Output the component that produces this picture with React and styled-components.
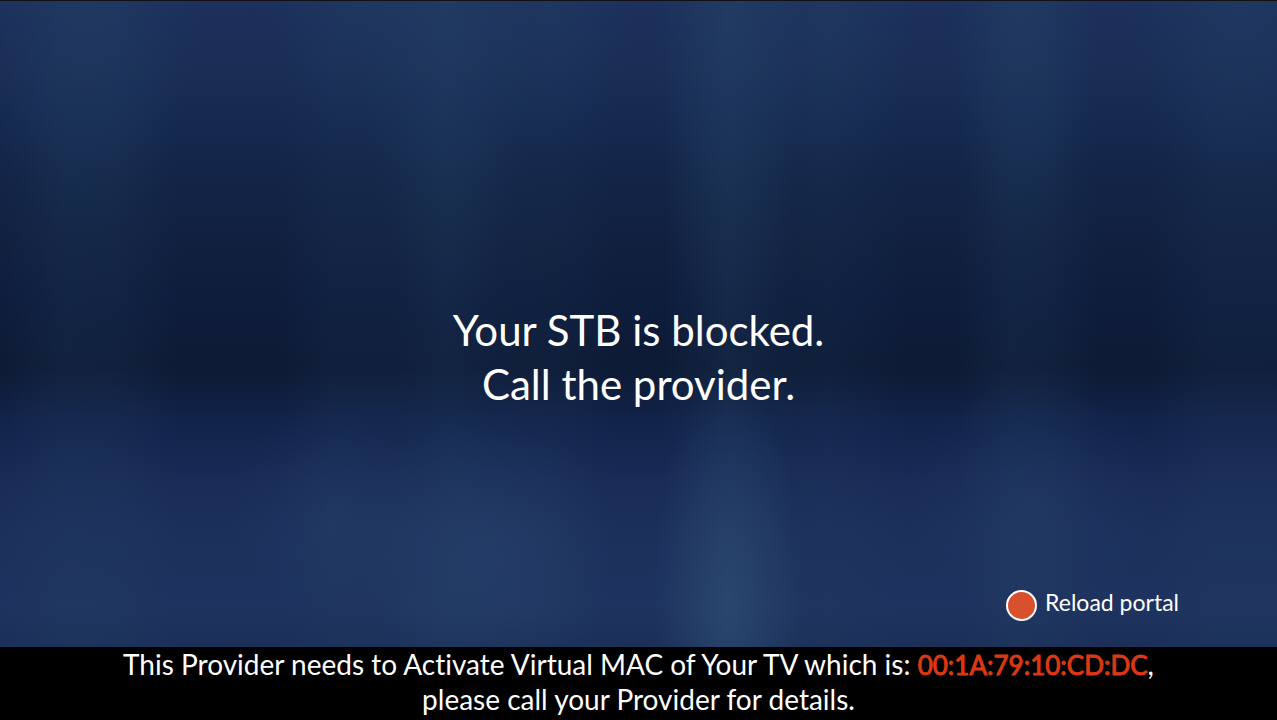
import React from "react";
import styled, { createGlobalStyle } from "styled-components";

const App = () => {
  return (
    <Page>
      <GlobalStyle />
      <Screen>
        <Message>
          Your STB is blocked.
          <br />
          Call the provider.
        </Message>
        <Actions>
          <ReloadButton type="button" onClick={() => window.location.reload()}>
            <RedKey />
            <span>Reload portal</span>
          </ReloadButton>
        </Actions>
      </Screen>
      <Notice>
        This Provider needs to Activate Virtual MAC of Your TV which is:{" "}
        <Mac>00:1A:79:10:CD:DC</Mac>,
        <br />
        please call your Provider for details.
      </Notice>
    </Page>
  );
};

const GlobalStyle = createGlobalStyle`
  * {
    box-sizing: border-box;
  }
  body {
    margin: 0;
    background: #000;
    color: #fff;
    font-family: "Myriad Pro", Lato, sans-serif;
    font-variant-ligatures: none;
  }
`;

const Page = styled.div`
  display: flex;
  flex-direction: column;
  min-height: 100vh;
`;

const Screen = styled.main`
  flex: 1;
  display: flex;
  flex-direction: column;
  border-top: 1px solid #111;
  padding: 122px 98px 26px;
  background:
    radial-gradient(ellipse 6% 36% at 57% 94%, rgba(56, 96, 136, 0.36), transparent),
    radial-gradient(ellipse 10% 22% at 38% 85%, rgba(50, 86, 130, 0.26), transparent),
    radial-gradient(ellipse 8% 16% at 26% 79%, rgba(50, 86, 130, 0.16), transparent),
    radial-gradient(ellipse 10% 18% at 81% 77%, rgba(50, 86, 130, 0.14), transparent),
    radial-gradient(ellipse 9% 36% at 7% 0%, rgba(38, 70, 108, 0.26), transparent),
    radial-gradient(ellipse 7% 20% at 28% 0%, rgba(38, 70, 108, 0.2), transparent),
    radial-gradient(ellipse 7% 50% at 35% 0%, rgba(38, 70, 108, 0.3), transparent),
    radial-gradient(ellipse 7% 24% at 43% 0%, rgba(38, 70, 108, 0.2), transparent),
    radial-gradient(ellipse 6% 56% at 57% 0%, rgba(38, 70, 108, 0.34), transparent),
    radial-gradient(ellipse 7% 30% at 65% 0%, rgba(38, 70, 108, 0.22), transparent),
    radial-gradient(ellipse 6% 40% at 80% 0%, rgba(38, 70, 108, 0.3), transparent),
    radial-gradient(ellipse 9% 30% at 97% 0%, rgba(38, 70, 108, 0.22), transparent),
    linear-gradient(
      90deg,
      rgba(38, 70, 104, 0) 0%,
      rgba(38, 70, 104, 0.18) 5%,
      rgba(38, 70, 104, 0.16) 9%,
      rgba(38, 70, 104, 0) 14%,
      rgba(38, 70, 104, 0) 22%,
      rgba(38, 70, 104, 0.12) 26%,
      rgba(38, 70, 104, 0.12) 31%,
      rgba(38, 70, 104, 0.22) 35%,
      rgba(38, 70, 104, 0.12) 39%,
      rgba(38, 70, 104, 0.1) 44%,
      rgba(38, 70, 104, 0) 48%,
      rgba(38, 70, 104, 0) 52%,
      rgba(38, 70, 104, 0.24) 57%,
      rgba(38, 70, 104, 0.1) 62%,
      rgba(38, 70, 104, 0.12) 65%,
      rgba(38, 70, 104, 0) 71%,
      rgba(38, 70, 104, 0) 75%,
      rgba(38, 70, 104, 0.18) 79%,
      rgba(38, 70, 104, 0.16) 82%,
      rgba(38, 70, 104, 0) 86%,
      rgba(38, 70, 104, 0) 90%,
      rgba(38, 70, 104, 0.14) 95%,
      rgba(38, 70, 104, 0.14) 100%
    ),
    linear-gradient(
      180deg,
      #1c305c 0%,
      #1a2d55 10%,
      #162950 18%,
      #122446 28%,
      #11203f 38%,
      #0e1d3c 46%,
      #0d1a35 57%,
      #12234a 65%,
      #192b56 74%,
      #1c305c 82%,
      #1e335f 94%,
      #1b2f58 100%
    );
`;

const Message = styled.h1`
  flex: 1;
  display: grid;
  place-content: center;
  margin: 0;
  font-size: 42px;
  font-weight: 400;
  line-height: 54px;
  text-align: center;
`;

const Actions = styled.div`
  display: flex;
  justify-content: flex-end;
`;

const ReloadButton = styled.button`
  display: flex;
  align-items: flex-start;
  gap: 8px;
  padding: 0;
  border: 0;
  background: none;
  color: inherit;
  font-family: inherit;
  font-size: 23px;
  line-height: 24px;
  cursor: pointer;
`;

const RedKey = styled.i`
  width: 31px;
  height: 31px;
  border: 2px solid #fff;
  border-radius: 50%;
  background: #d9512c;
`;

const Notice = styled.footer`
  padding: 0 16px 3px;
  background: #000;
  font-size: 28px;
  line-height: 35px;
  text-align: center;
`;

const Mac = styled.span`
  color: #dc3812;
  font-size: 26px;
  line-height: 1;
  -webkit-text-stroke: 1px #dc3812;
`;

export default App;
